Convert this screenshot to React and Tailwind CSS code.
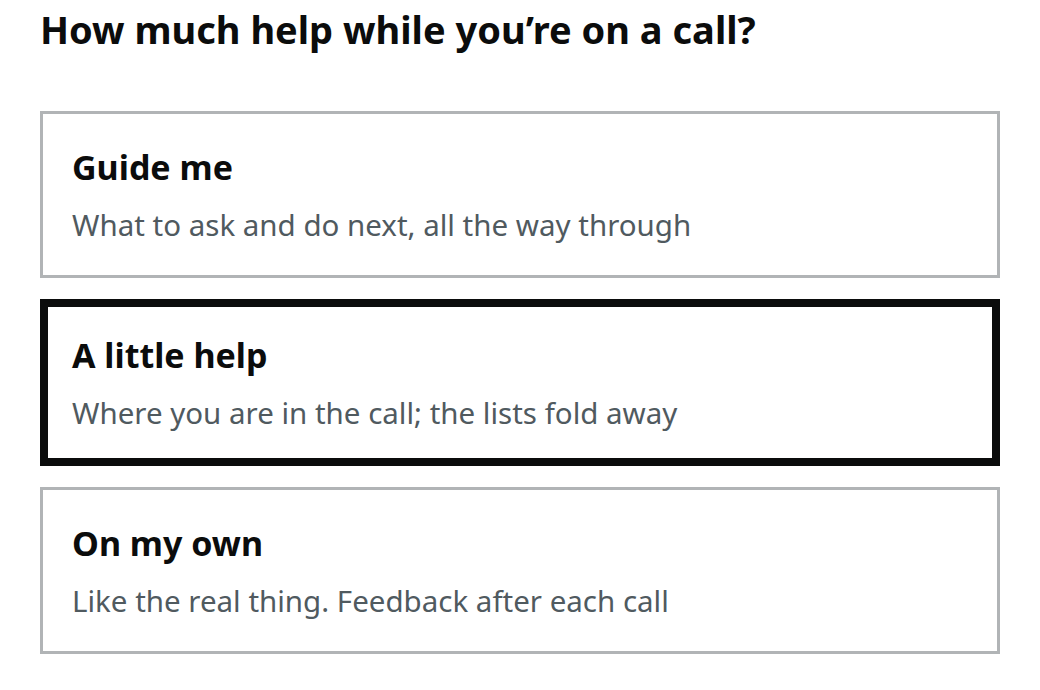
import { useState } from 'react';

const options = [
    { id: 'guide', title: 'Guide me', hint: 'What to ask and do next, all the way through' },
    { id: 'little', title: 'A little help', hint: 'Where you are in the call; the lists fold away' },
    { id: 'own', title: 'On my own', hint: 'Like the real thing. Feedback after each call' },
];

export default function App() {
    const [selected, setSelected] = useState('little');

    return (
        <div className="min-h-[690px] bg-white px-10 pt-[6px] text-[#0b0c0c]" style={{ fontFamily: '"Noto Sans", "Open Sans", sans-serif' }}>
            <h1 className="text-[38px] font-bold leading-[1.25] mb-[57px]">How much help while you’re on a call?</h1>

            <div className="flex flex-col gap-[21px] w-[960px]">
                {options.map(opt => {
                    const isOn = selected === opt.id;
                    return (
                        <button
                            key={opt.id}
                            type="button"
                            onClick={() => setSelected(opt.id)}
                            className={
                                isOn
                                    ? 'h-[167px] text-left border-[8px] border-[#0b0c0c] px-[24px] pt-[3px] flex flex-col justify-center'
                                    : 'h-[167px] text-left border-[3px] border-[#b1b4b6] px-[29px] pt-[3px] flex flex-col justify-center'
                            }
                        >
                            <span className="block text-[34px] font-bold leading-[1.25] text-[#0b0c0c]">{opt.title}</span>
                            <span className="block mt-[17.5px] text-[29.5px] leading-[1.3] text-[#505a5f]">{opt.hint}</span>
                        </button>
                    );
                })}
            </div>
        </div>
    );
}
